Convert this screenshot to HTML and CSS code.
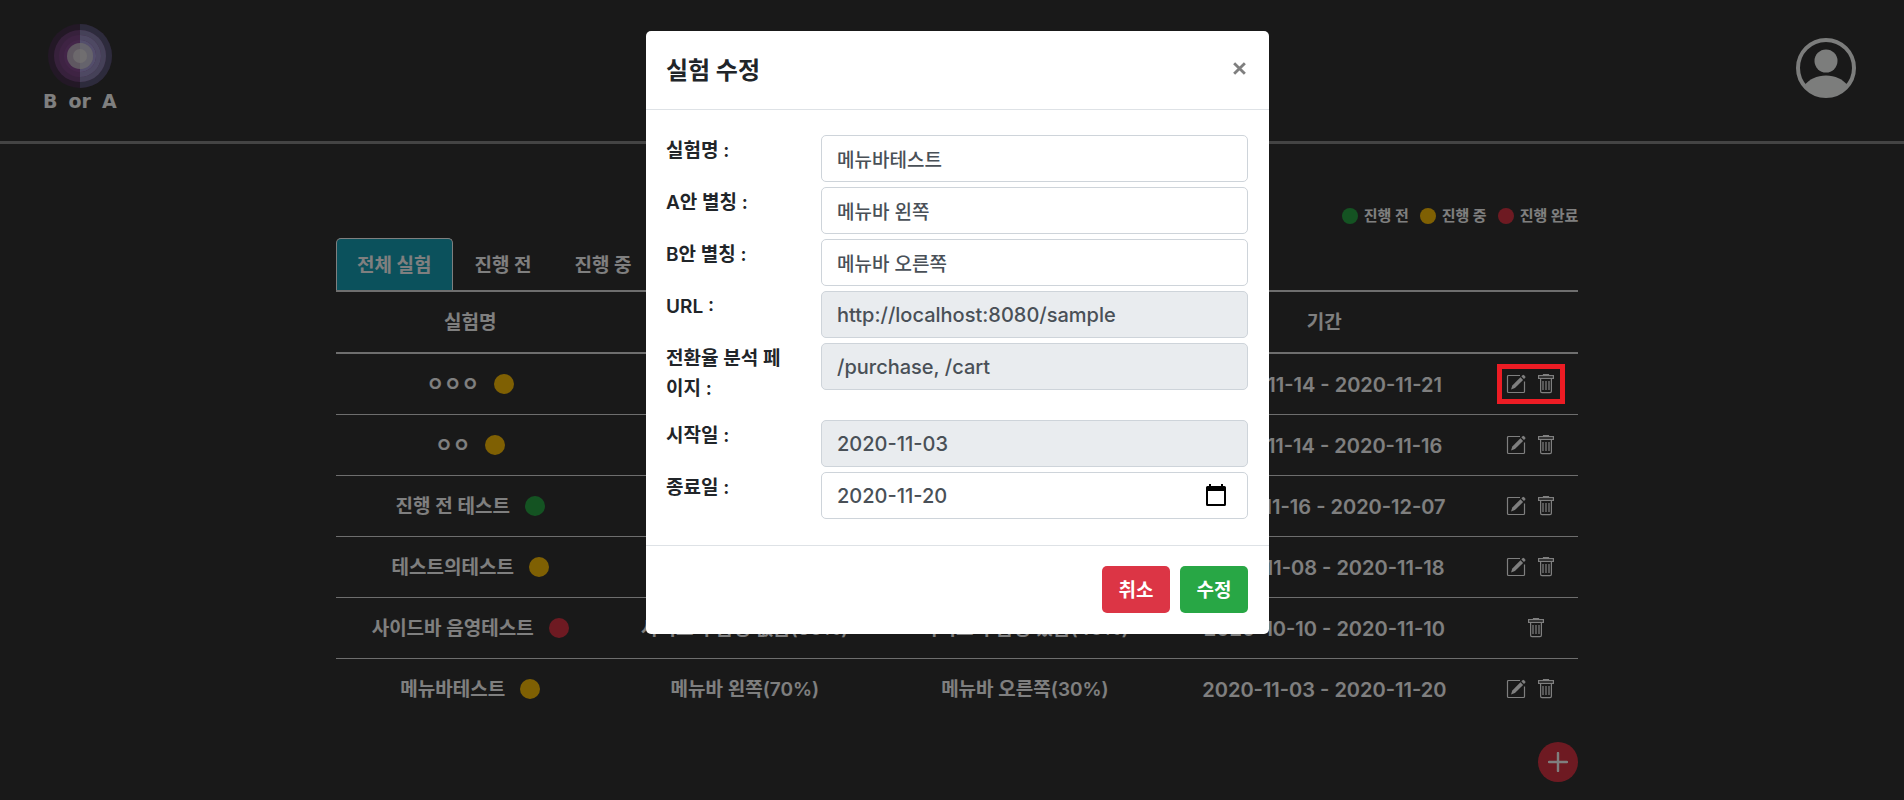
FILE: index.html
```html
<!DOCTYPE html>
<html lang="ko">
<head>
<meta charset="utf-8">
<title>B or A</title>
<meta name="viewport" content="width=device-width, initial-scale=1">
<link rel="stylesheet" href="styles.css">
</head>
<body>
<svg class="sprite" aria-hidden="true">
  <symbol id="edit" viewBox="0 0 20 20">
    <path d="M14 1.500H2.500a1 1 0 0 0-1 1v15a1 1 0 0 0 1 1h15a1 1 0 0 0 1-1V7.500" fill="none" stroke="currentColor" stroke-width="1.200"/>
    <path d="M5 15.500l1.300-4L14.500 3.300l2.600 2.600L8.900 14.100z" fill="currentColor"/>
    <path d="M15.400 2.400l1.200-1.200a1 1 0 0 1 1.400 0l1.200 1.200a1 1 0 0 1 0 1.400L18 5z" fill="currentColor"/>
  </symbol>
  <symbol id="trash" viewBox="0 0 20 20">
    <g fill="none" stroke="currentColor" stroke-width="1.200">
      <path d="M7.500 1.500V.6h5v.9M2.600 1.700h14.800v2.600H2.600zM4.600 4.300v12.900a1.400 1.400 0 0 0 1.400 1.400h8a1.400 1.400 0 0 0 1.400-1.400V4.300"/>
      <path d="M7 7v9M10 7v9M13 7v9"/>
    </g>
  </symbol>
</svg>

<header class="topbar">
  <a class="brand" href="#">
    <svg class="brand-mark" viewBox="0 0 64 64" aria-hidden="true">
      <circle cx="32" cy="32" r="32" fill="#46304c"/><path d="M32 0a32 32 0 0 1 0 64z" fill="#5b5678"/>
      <circle cx="32" cy="32" r="26" fill="#6f4379"/><path d="M32 6a26 26 0 0 1 0 52z" fill="#8a82b0"/>
      <circle cx="32" cy="32" r="21" fill="#7d4686"/><path d="M32 11a21 21 0 0 1 0 42z" fill="#9c92c6"/>
      <circle cx="32" cy="32" r="16" fill="#874b92"/><path d="M32 16a16 16 0 0 1 0 32z" fill="#a79cd6"/>
      <circle cx="32" cy="32" r="13" fill="#beaec2"/><path d="M32 19a13 13 0 0 1 0 26z" fill="#cbc6d8"/>
      <circle cx="32" cy="32" r="7" fill="#d8d0d8"/><path d="M32 25a7 7 0 0 1 0 14z" fill="#e0dce0"/>
    </svg>
    <span class="brand-name"><span>B</span><span>or</span><span>A</span></span>
  </a>
  <button class="avatar" type="button" aria-label="내 정보">
    <svg viewBox="0 0 60 60" aria-hidden="true">
      <circle cx="30" cy="30" r="28" fill="none" stroke="currentColor" stroke-width="4"/>
      <circle cx="30" cy="23" r="11.500" fill="currentColor"/>
      <path d="M8 48c5-7 13-10.500 22-10.500S47 41 52 48c-6 6-13 9-22 9S14 54 8 48z" fill="currentColor"/>
    </svg>
  </button>
</header>

<main class="content">
  <ul class="legend">
    <li><i class="dot before"></i>진행 전</li>
    <li><i class="dot running"></i>진행 중</li>
    <li><i class="dot done"></i>진행 완료</li>
  </ul>
  <nav class="tabs">
    <a class="tab active" href="#">전체 실험</a>
    <a class="tab" href="#">진행 전</a>
    <a class="tab" href="#">진행 중</a>
  </nav>
  <table class="tests">
    <colgroup><col class="c-name"><col class="c-a"><col class="c-b"><col class="c-period"><col class="c-tools"></colgroup>
    <thead>
      <tr><th>실험명</th><th></th><th></th><th>기간</th><th></th></tr>
    </thead>
    <tbody>
      <tr>
        <td><span class="name">ㅇㅇㅇ<i class="dot running"></i></span></td><td></td><td></td><td class="period">2020-11-14 - 2020-11-21</td>
        <td><span class="tools marked"><button type="button" aria-label="수정"><svg><use href="#edit"/></svg></button><button type="button" aria-label="삭제"><svg><use href="#trash"/></svg></button></span></td>
      </tr>
      <tr>
        <td><span class="name">ㅇㅇ<i class="dot running"></i></span></td><td></td><td></td><td class="period">2020-11-14 - 2020-11-16</td>
        <td><span class="tools"><button type="button" aria-label="수정"><svg><use href="#edit"/></svg></button><button type="button" aria-label="삭제"><svg><use href="#trash"/></svg></button></span></td>
      </tr>
      <tr>
        <td><span class="name">진행 전 테스트<i class="dot before"></i></span></td><td></td><td></td><td class="period">2020-11-16 - 2020-12-07</td>
        <td><span class="tools"><button type="button" aria-label="수정"><svg><use href="#edit"/></svg></button><button type="button" aria-label="삭제"><svg><use href="#trash"/></svg></button></span></td>
      </tr>
      <tr>
        <td><span class="name">테스트의테스트<i class="dot running"></i></span></td><td></td><td></td><td class="period">2020-11-08 - 2020-11-18</td>
        <td><span class="tools"><button type="button" aria-label="수정"><svg><use href="#edit"/></svg></button><button type="button" aria-label="삭제"><svg><use href="#trash"/></svg></button></span></td>
      </tr>
      <tr>
        <td><span class="name">사이드바 음영테스트<i class="dot done"></i></span></td><td>사이드바 음영 없음(60%)</td><td>사이드바 음영 있음(40%)</td><td class="period">2020-10-10 - 2020-11-10</td>
        <td><span class="tools single"><button type="button" aria-label="삭제"><svg><use href="#trash"/></svg></button></span></td>
      </tr>
      <tr>
        <td><span class="name">메뉴바테스트<i class="dot running"></i></span></td><td>메뉴바 왼쪽(70%)</td><td>메뉴바 오른쪽(30%)</td><td class="period">2020-11-03 - 2020-11-20</td>
        <td><span class="tools"><button type="button" aria-label="수정"><svg><use href="#edit"/></svg></button><button type="button" aria-label="삭제"><svg><use href="#trash"/></svg></button></span></td>
      </tr>
    </tbody>
  </table>
  <div class="add-row">
    <button class="add" type="button" aria-label="실험 추가">
      <svg viewBox="0 0 20 20" aria-hidden="true"><path d="M10 1v18M1 10h18" stroke="currentColor" stroke-width="2.400" stroke-linecap="round"/></svg>
    </button>
  </div>
</main>

<div class="overlay">
  <form class="modal" role="dialog" aria-labelledby="modal-title">
    <div class="modal-header">
      <h2 id="modal-title">실험 수정</h2>
      <button class="close" type="button" aria-label="닫기">
        <svg viewBox="0 0 14 14" aria-hidden="true"><path d="M2 2l10 10M12 2L2 12" stroke="currentColor" stroke-width="2.600"/></svg>
      </button>
    </div>
    <div class="modal-body">
      <div class="field"><label for="f-name">실험명 :</label><input id="f-name" type="text" value="메뉴바테스트"></div>
      <div class="field"><label for="f-a">A안 별칭 :</label><input id="f-a" type="text" value="메뉴바 왼쪽"></div>
      <div class="field"><label for="f-b">B안 별칭 :</label><input id="f-b" type="text" value="메뉴바 오른쪽"></div>
      <div class="field"><label for="f-url">URL :</label><input id="f-url" class="latin" type="text" value="http://localhost:8080/sample" readonly></div>
      <div class="field"><label for="f-pages">전환율 분석 페이지 :</label><input id="f-pages" class="latin" type="text" value="/purchase, /cart" readonly></div>
      <div class="field"><label for="f-start">시작일 :</label><input id="f-start" class="latin" type="text" value="2020-11-03" readonly></div>
      <div class="field">
        <label for="f-end">종료일 :</label>
        <div class="date">
          <input id="f-end" class="latin" type="text" value="2020-11-20">
          <button type="button" aria-label="날짜 선택">
            <svg viewBox="0 0 20 22" aria-hidden="true"><path d="M3 0h2v2h10V0h2v2h1.500A1.500 1.500 0 0 1 20 3.500v17a1.500 1.500 0 0 1-1.500 1.500h-17A1.500 1.500 0 0 1 0 20.500v-17A1.500 1.500 0 0 1 1.500 2H3zM2 7v13h16V7z" fill="currentColor" fill-rule="evenodd"/></svg>
          </button>
        </div>
      </div>
    </div>
    <div class="modal-footer">
      <button class="btn cancel" type="button">취소</button>
      <button class="btn submit" type="submit">수정</button>
    </div>
  </form>
</div>
</body>
</html>
```
FILE: styles.css
```css
* { box-sizing: border-box; }

body {
  margin: 0;
  min-height: 100vh;
  overflow: hidden;
  background: #333;
  color: #fff;
  font: 500 19px/30px Inter, "Noto Sans CJK KR", sans-serif;
}

button, input { font: inherit; color: inherit; }
button { padding: 0; border: 0; background: none; cursor: pointer; }
svg { display: block; }
a { color: inherit; text-decoration: none; }
.sprite { position: absolute; width: 0; height: 0; }

.topbar {
  display: flex;
  justify-content: space-between;
  align-items: flex-start;
  height: 144px;
  padding: 24px 48px 0 43px;
  border-bottom: 3px solid #888;
}
.brand { display: flex; flex-direction: column; align-items: center; gap: 3px; }
.brand-mark { width: 64px; height: 64px; }
.brand-name {
  display: flex;
  gap: 11px;
  font: 900 19px/20px "DejaVu Sans", sans-serif;
}
.avatar { margin-top: 14px; color: #f8faf9; }
.avatar svg { width: 60px; height: 60px; }

.content { padding: 57px 17.1% 0 17.65%; }

.legend {
  display: flex;
  justify-content: flex-end;
  gap: 11px;
  margin: 0;
  padding: 0;
  list-style: none;
  font-size: 15px;
  font-weight: 700;
}
.legend li { display: flex; align-items: center; gap: 6px; }
.dot { width: 20px; height: 20px; border-radius: 50%; }
.legend .dot { width: 16px; height: 16px; }
.before { background: #28a745; }
.running { background: #ffc107; }
.done { background: #dc3545; }

.tabs { display: flex; margin-top: 7px; font-weight: 700; }
.tab {
  padding: 12px 21px 9px 20px;
  border: 1px solid transparent;
  border-bottom: 0;
  border-radius: 5px 5px 0 0;
  white-space: nowrap;
}
.tab.active { background: #17a2b8; border-color: #fff; }

.tests {
  width: 100%;
  table-layout: fixed;
  border-collapse: separate;
  border-spacing: 0;
  text-align: center;
  font-weight: 600;
}
.c-name { width: 21.6%; }
.c-a { width: 22.6%; }
.c-b { width: 22.5%; }
.c-period { width: 25.7%; }
.c-tools { width: 7.6%; }
.tests th, .tests td { padding: 16px 0 14px; white-space: nowrap; }
.tests th { border-top: 2px solid #ddd; border-bottom: 2px solid #ddd; font-weight: 600; }
.tests td { border-bottom: 1px solid #ddd; }
.tests tr:last-child td { border-bottom-color: transparent; }
.period { font-size: 20px; }
.name { display: flex; justify-content: center; align-items: center; gap: 15px; }
.name .dot { margin-bottom: 2px; }

.tools { display: flex; justify-content: center; position: relative; width: 50px; margin: 0 auto 2px; padding: 4px 0; gap: 10px; }
.tests .tools { height: 28px; }
.tools.single { padding-left: 10px; }
.tools svg { width: 20px; height: 20px; }
.tools.marked::after {
  content: "";
  position: absolute;
  inset: -6px -9px;
  z-index: 20;
  border: 5px solid #ed1c24;
  pointer-events: none;
}

.add-row { display: flex; justify-content: flex-end; margin-top: 22px; }
.add {
  display: grid;
  place-items: center;
  width: 40px;
  height: 40px;
  border-radius: 50%;
  background: #dc3545;
}
.add svg { width: 20px; height: 20px; }

.overlay {
  position: fixed;
  inset: 0;
  z-index: 10;
  padding: 31px 0 0 11px;
  background: rgba(0, 0, 0, 0.5);
}
.modal {
  max-width: 623px;
  margin: 0 auto;
  border-radius: 5px;
  background: #fff;
  color: #212529;
}
.modal-header {
  display: flex;
  justify-content: space-between;
  align-items: center;
  padding: 21px 20px 19px;
  border-bottom: 1px solid #dee2e6;
}
.modal-header h2 { margin: 0; font-size: 24px; font-weight: 700; line-height: 38px; }
.close { padding: 2px; margin-bottom: 6px; color: #7f7f7f; }
.close svg { width: 15px; height: 15px; }

.modal-body { display: grid; gap: 5px; padding: 25px 21px 26px 20px; }
.field { display: grid; grid-template-columns: 125px 1fr; gap: 30px; align-items: start; }
.field label { padding-top: 1px; font-weight: 600; }
.field:nth-child(5) label { padding-bottom: 11px; }
.field input {
  width: 100%;
  height: 47px;
  padding: 0 15px 1px;
  border: 1px solid #ced4da;
  border-radius: 5px;
  background: #fff;
  color: #495057;
}
.field .latin { padding-bottom: 0; font-size: 20px; }
.field input:read-only { background: #e9ecef; }
.date { position: relative; }
.date button { position: absolute; right: 22px; top: 12px; color: #000; }
.date svg { width: 20px; height: 22px; }

.modal-footer {
  display: flex;
  justify-content: flex-end;
  gap: 10px;
  padding: 20px 21px 21px;
  border-top: 1px solid #dee2e6;
}
.btn { padding: 10px 16px 7px; min-width: 68px; border-radius: 5px; color: #fff; font-weight: 700; }
.cancel { background: #dc3545; }
.submit { background: #28a745; }
```
